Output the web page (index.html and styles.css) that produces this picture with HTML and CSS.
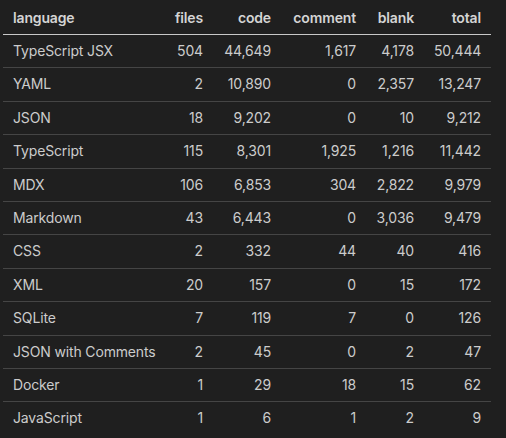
FILE: index.html
```html
<!DOCTYPE html>
<html>
<head>
<meta charset="utf-8">
<link rel="stylesheet" href="styles.css">
</head>
<body>
<table class="stats">
  <colgroup>
    <col class="c-lang"><col class="c-files"><col class="c-code"><col class="c-comment"><col class="c-blank"><col class="c-total">
  </colgroup>
  <thead>
    <tr><th class="left">language</th><th>files</th><th>code</th><th>comment</th><th>blank</th><th>total</th></tr>
  </thead>
  <tbody>
    <tr><td class="left">TypeScript JSX</td><td>504</td><td>44,649</td><td>1,617</td><td>4,178</td><td>50,444</td></tr>
    <tr><td class="left">YAML</td><td>2</td><td>10,890</td><td>0</td><td>2,357</td><td>13,247</td></tr>
    <tr><td class="left">JSON</td><td>18</td><td>9,202</td><td>0</td><td>10</td><td>9,212</td></tr>
    <tr><td class="left">TypeScript</td><td>115</td><td>8,301</td><td>1,925</td><td>1,216</td><td>11,442</td></tr>
    <tr><td class="left">MDX</td><td>106</td><td>6,853</td><td>304</td><td>2,822</td><td>9,979</td></tr>
    <tr><td class="left">Markdown</td><td>43</td><td>6,443</td><td>0</td><td>3,036</td><td>9,479</td></tr>
    <tr><td class="left">CSS</td><td>2</td><td>332</td><td>44</td><td>40</td><td>416</td></tr>
    <tr><td class="left">XML</td><td>20</td><td>157</td><td>0</td><td>15</td><td>172</td></tr>
    <tr><td class="left">SQLite</td><td>7</td><td>119</td><td>7</td><td>0</td><td>126</td></tr>
    <tr><td class="left">JSON with Comments</td><td>2</td><td>45</td><td>0</td><td>2</td><td>47</td></tr>
    <tr><td class="left">Docker</td><td>1</td><td>29</td><td>18</td><td>15</td><td>62</td></tr>
    <tr><td class="left">JavaScript</td><td>1</td><td>6</td><td>1</td><td>2</td><td>9</td></tr>
  </tbody>
</table>
</body>
</html>
```
FILE: styles.css
```css
html, body {
  margin: 0;
  padding: 0;
  background: #1f1f1f;
}
body {
  font-family: Inter, "Noto Sans", sans-serif;
  font-size: 14px;
  line-height: 22.4px;
  letter-spacing: -0.15px;
  color: #cccccc;
}
.stats {
  border-collapse: collapse;
  table-layout: fixed;
  width: 488px;
  margin: 1.6px 0 0 3px;
}
.c-lang { width: 158px; }
.c-files { width: 52px; }
.c-code { width: 68px; }
.c-comment { width: 85px; }
.c-blank { width: 58px; }
.c-total { width: 67px; }
.stats th, .stats td {
  padding: 5px 10px;
  text-align: right;
  white-space: nowrap;
}
.stats th {
  font-weight: 600;
  color: #d4d4d4;
  border-bottom: 1px solid #c8c8c8;
}
.stats td {
  border-bottom: 1px solid #454545;
}
.stats tbody tr:last-child td {
  border-bottom: none;
}
.stats .left {
  text-align: left;
}
```
